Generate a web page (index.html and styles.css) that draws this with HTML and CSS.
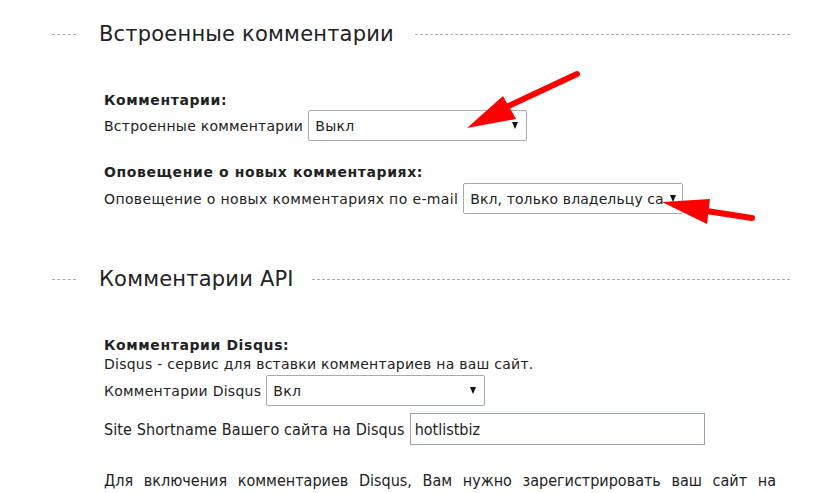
FILE: index.html
```html
<!DOCTYPE html>
<html lang="ru">
<head>
<meta charset="utf-8">
<link rel="stylesheet" href="styles.css">
</head>
<body>
<div class="page">
  <section class="fs">
    <div class="legend"><span class="dash dash-l"></span><span class="legend-text">Встроенные комментарии</span><span class="dash dash-r"></span></div>
    <div class="group g1">
      <div class="heading">Комментарии:</div>
      <div class="row"><span class="label">Встроенные комментарии</span><div class="select"><span class="val">Выкл</span><span class="caret"></span></div></div>
    </div>
    <div class="group g2">
      <div class="heading">Оповещение о новых комментариях:</div>
      <div class="row tight"><span class="label wide">Оповещение о новых комментариях по e-mail</span><div class="select sel2"><span class="val">Вкл, только владельцу са</span><span class="caret"></span></div></div>
    </div>
  </section>
  <section class="fs fs2">
    <div class="legend"><span class="dash dash-l"></span><span class="legend-text">Комментарии API</span><span class="dash dash-r"></span></div>
    <div class="group g1">
      <div class="heading">Комментарии Disqus:</div>
      <div class="desc">Disqus - сервис для вставки комментариев на ваш сайт.</div>
      <div class="row tight"><span class="label">Комментарии Disqus</span><div class="select"><span class="val">Вкл</span><span class="caret"></span></div></div>
      <div class="row row-input"><span class="label alt">Site Shortname Вашего сайта на Disqus</span><div class="input">hotlistbiz</div></div>
      <p class="note">Для включения комментариев Disqus, Вам нужно зарегистрировать ваш сайт на</p>
    </div>
  </section>
  <svg class="arrows" width="819" height="493" viewBox="0 0 819 493">
    <line x1="577" y1="74" x2="500" y2="110" stroke="#f00" stroke-width="6" stroke-linecap="round"/>
    <polygon points="467,128 503,96 516,119" fill="#f00"/>
    <line x1="752" y1="218" x2="700" y2="210" stroke="#f00" stroke-width="6" stroke-linecap="round"/>
    <polygon points="662,202 710,199 707,224" fill="#f00"/>
  </svg>
</div>
</body>
</html>
```
FILE: styles.css
```css
html, body { margin: 0; padding: 0; background: #fff; }
.page {
  position: relative;
  width: 819px;
  height: 493px;
  overflow: hidden;
  font-family: "DejaVu Sans", Verdana, sans-serif;
  font-size: 14px;
  letter-spacing: 0.25px;
  color: #222;
}
.legend {
  display: flex;
  align-items: center;
  height: 30px;
  margin-top: 19px;
  padding-left: 52px;
  padding-right: 29px;
}
.fs2 .legend { margin-top: 50px; }
.dash { border-top: 1px dashed #aaa; height: 0; }
.dash-l { width: 24px; margin-right: 23px; flex: 0 0 auto; }
.dash-r { flex: 1; margin-left: 21px; }
.fs2 .dash-r { margin-left: 18px; }
.legend-text { font-size: 21px; letter-spacing: 0.2px; color: #222; white-space: nowrap; }
.group { padding-left: 104px; }
.g1 { margin-top: 42px; }
.g2 { margin-top: 22px; }
.heading { font-weight: bold; line-height: 19px; height: 19px; letter-spacing: 0.6px; }
.desc { line-height: 19px; }
.row { display: flex; align-items: center; gap: 5px; }
.row.tight { margin-top: 1px; }
.label { white-space: nowrap; }
.label.wide { letter-spacing: 0.37px; }
.select {
  box-sizing: border-box;
  width: 219px;
  height: 31px;
  border: 1px solid #aaa;
  border-radius: 2px;
  display: flex;
  align-items: center;
  padding: 0 8px 0 6px;
  font-size: 14px;
  letter-spacing: 0.35px;
  flex: 0 0 auto;
}
.sel2 { width: 220px; padding-right: 6px; letter-spacing: 0.1px; }
.val { flex: 1; white-space: nowrap; }
.caret {
  width: 0; height: 0;
  border-left: 3.5px solid transparent;
  border-right: 3.5px solid transparent;
  border-top: 7px solid #111;
  flex: 0 0 auto;
  margin-left: 2px;
}
.row-input { margin-top: 7px; }
.label.alt { font-family: "DejaVu Sans Condensed", Tahoma, sans-serif; font-size: 16px; letter-spacing: 0.1px; }
.input {
  box-sizing: border-box;
  width: 295px;
  height: 32px;
  border: 1px solid #9aa3ab;
  padding: 0 4px;
  display: flex;
  align-items: center;
  font-family: "DejaVu Sans Condensed", Tahoma, sans-serif;
  font-size: 16px;
  letter-spacing: 0;
  flex: 0 0 auto;
}
.note {
  margin: 26px 0 0;
  width: 672px;
  text-align: justify;
  text-align-last: justify;
  line-height: 20px;
  font-family: "DejaVu Sans Condensed", Tahoma, sans-serif;
  font-size: 16px;
  letter-spacing: 0;
}
.arrows { position: absolute; left: 0; top: 0; }
```
